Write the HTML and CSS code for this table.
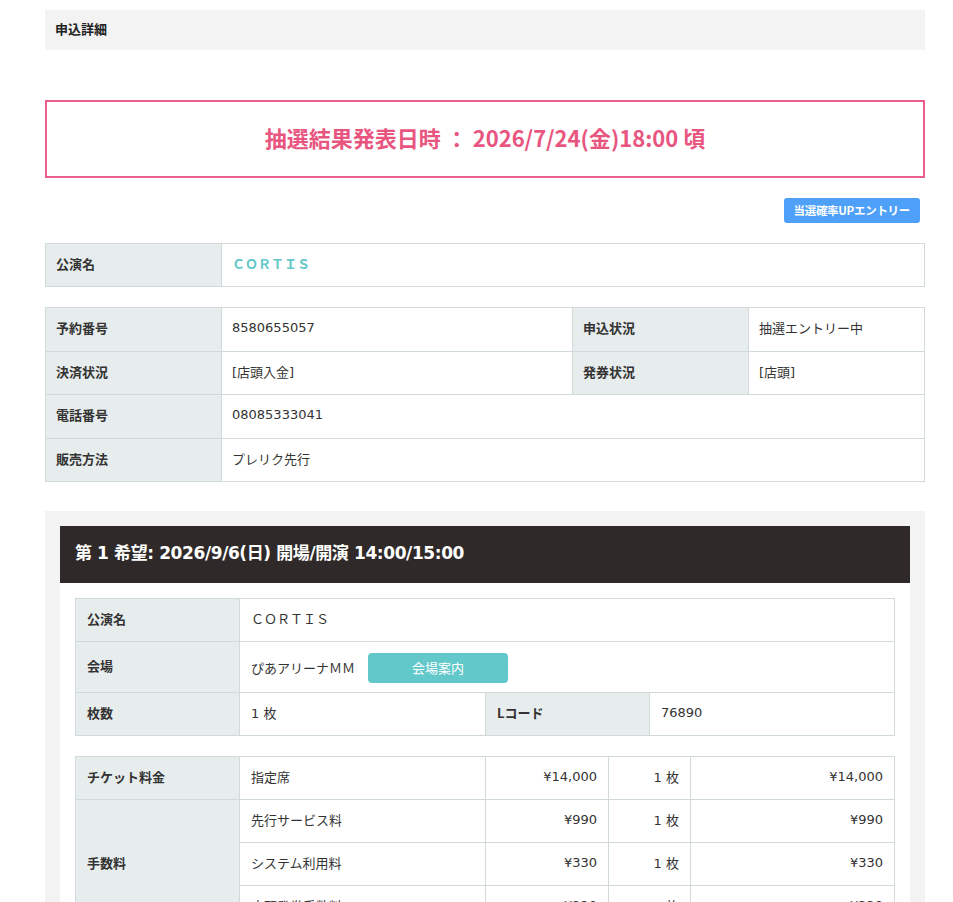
FILE: index.html
```html
<!DOCTYPE html>
<html lang="ja">
<head>
<meta charset="utf-8">
<title>申込詳細</title>
<link rel="stylesheet" href="styles.css">
</head>
<body>
<div class="page">
  <div class="page-title">申込詳細</div>

  <div class="announce">抽選結果発表日時 ： 2026/7/24(金)18:00 頃</div>

  <div class="btn-row"><a class="btn-up" href="#">当選確率UPエントリー</a></div>

  <table class="tbl tbl-main">
    <colgroup><col class="c-lab"><col></colgroup>
    <tr><th>公演名</th><td class="perf">ＣＯＲＴＩＳ</td></tr>
  </table>

  <table class="tbl tbl-main tbl-info">
    <colgroup><col class="c-lab"><col class="c-val"><col class="c-lab"><col></colgroup>
    <tr><th>予約番号</th><td>8580655057</td><th>申込状況</th><td>抽選エントリー中</td></tr>
    <tr><th>決済状況</th><td>[店頭入金]</td><th>発券状況</th><td>[店頭]</td></tr>
    <tr><th>電話番号</th><td colspan="3">08085333041</td></tr>
    <tr><th>販売方法</th><td colspan="3">プレリク先行</td></tr>
  </table>

  <section class="choice">
    <h2 class="choice-head">第 1 希望: 2026/9/6(日) 開場/開演 14:00/15:00</h2>
    <div class="choice-body">
      <table class="tbl tbl-inner">
        <colgroup><col class="i-lab"><col class="i-val"><col class="i-lab"><col></colgroup>
        <tr><th>公演名</th><td colspan="3">ＣＯＲＴＩＳ</td></tr>
        <tr class="venue-row"><th>会場</th><td colspan="3"><div class="venue"><span>ぴあアリーナＭＭ</span><a class="btn-venue" href="#">会場案内</a></div></td></tr>
        <tr><th>枚数</th><td>1 枚</td><th>Lコード</th><td>76890</td></tr>
      </table>

      <table class="tbl tbl-inner tbl-price">
        <colgroup><col class="i-lab"><col class="p-item"><col class="p-unit"><col class="p-qty"><col></colgroup>
        <tr><th>チケット料金</th><td>指定席</td><td class="num">¥14,000</td><td class="num">1 枚</td><td class="num">¥14,000</td></tr>
        <tr><th rowspan="3">手数料</th><td>先行サービス料</td><td class="num">¥990</td><td class="num">1 枚</td><td class="num">¥990</td></tr>
        <tr><td>システム利用料</td><td class="num">¥330</td><td class="num">1 枚</td><td class="num">¥330</td></tr>
        <tr><td>店頭発券手数料</td><td class="num">¥220</td><td class="num">1 枚</td><td class="num">¥220</td></tr>
      </table>
    </div>
  </section>
</div>
</body>
</html>
```

FILE: styles.css
```css
html, body {
  margin: 0;
  padding: 0;
  background: #fff;
}
body {
  font-family: "DejaVu Sans", "Noto Sans CJK JP", sans-serif;
  font-size: 13px;
  color: #333;
}
.page {
  width: 880px;
  margin: 0 0 0 45px;
  padding-top: 10px;
}
.page-title {
  background: #f3f3f3;
  height: 40px;
  line-height: 37px;
  padding-left: 10px;
  font-weight: bold;
  font-family: "Noto Sans CJK JP", sans-serif;
  font-size: 13px;
  color: #222;
}
.announce {
  margin-top: 50px;
  border: 2px solid #ec5d89;
  display: flex;
  align-items: center;
  justify-content: center;
  color: #e8557f;
  font-family: "Noto Sans CJK JP", sans-serif;
  font-weight: bold;
  font-size: 22px;
  padding-bottom: 5px;
  box-sizing: content-box;
  height: 69px;
}
.btn-row {
  display: flex;
  justify-content: flex-end;
  padding-right: 5px;
  margin-top: 20px;
}
.btn-up {
  display: block;
  background: #4ea0f9;
  color: #fff;
  text-decoration: none;
  font-family: "Noto Sans CJK JP", sans-serif;
  font-weight: bold;
  font-size: 11.5px;
  height: 25px;
  line-height: 25px;
  padding: 0 10px;
  border-radius: 3px;
  letter-spacing: -0.3px;
}
.tbl {
  width: 100%;
  border-collapse: collapse;
  table-layout: fixed;
  margin-top: 20px;
}
.tbl th, .tbl td {
  border: 1px solid #d0dada;
  height: 39px;
  padding: 0 10px 3px;
  text-align: left;
  vertical-align: middle;
  font-size: 13px;
}
.tbl th {
  background: #e7ecec;
  font-family: "Noto Sans CJK JP", sans-serif;
  font-weight: bold;
  color: #333;
}
.tbl td {
  background: #fff;
}
.tbl-info th, .tbl-info td {
  height: 39.5px;
}
.c-lab { width: 176px; }
.c-val { width: 351px; }
.perf {
  color: #62c8c9;
  font-weight: bold;
  font-family: "Noto Sans CJK JP", sans-serif;
}
.choice {
  margin-top: 29px;
  background: #f3f3f3;
  padding: 15px 15px 40px;
}
.choice-head {
  margin: 0;
  background: #2f2a29;
  color: #fff;
  height: 57px;
  line-height: 55px;
  padding-left: 15px;
  font-size: 17px;
  font-weight: bold;
  font-family: "DejaVu Sans", "Noto Sans CJK JP", sans-serif;
  letter-spacing: -0.4px;
}
.choice-body {
  background: #fff;
  padding: 15px 15px 20px;
}
.tbl-inner {
  margin-top: 0;
}
.tbl-inner + .tbl-inner {
  margin-top: 20px;
}
.tbl-inner th, .tbl-inner td {
  padding: 0 11px 3px;
}
.i-lab { width: 164px; }
.i-val { width: 246px; }
.p-item { width: 246px; }
.p-unit { width: 123px; }
.p-qty { width: 82px; }
.venue-row td { height: 47px; }
.venue {
  display: flex;
  align-items: center;
  gap: 13px;
}
.btn-venue {
  display: block;
  width: 140px;
  height: 30px;
  line-height: 30px;
  text-align: center;
  background: #62c8c9;
  color: #fff;
  border-radius: 4px;
  text-decoration: none;
  font-family: "Noto Sans CJK JP", sans-serif;
}
.venue-row td { padding-top: 2px; padding-bottom: 1px; height: 47px; }
.tbl-price th, .tbl-price td {
  height: 39px;
}
.num {
  text-align: right !important;
}
```
